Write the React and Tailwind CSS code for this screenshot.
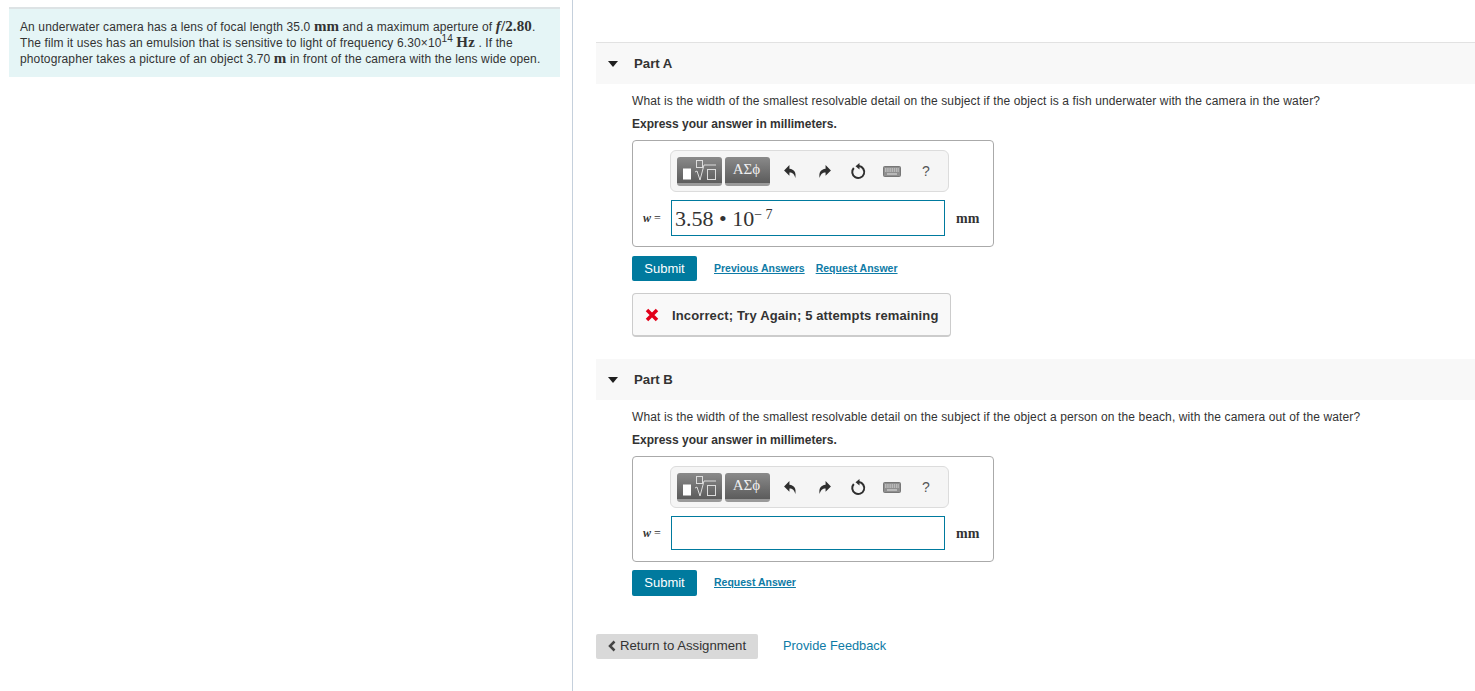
import React from "react";

const sans = "font-['Liberation_Sans',Arial,sans-serif]";
const serif = "font-['Liberation_Serif','Times_New_Roman',serif]";
const link = "text-[10.5px] font-bold text-[#0e7ba6] underline";
const math = `${serif} text-[15px] leading-[0] font-bold`;

function Toolbar() {
  return (
    <div className="ml-[37px] flex h-[42px] w-[279px] items-center rounded-[6px] border border-[#dcdcdc] bg-[#f5f5f5] pl-[6px]">
      <div className="h-[29px] w-[45px] rounded-[3px] border-b-[3px] border-[#9a9a9a] bg-gradient-to-b from-[#8a8a8a] to-[#5c5c5c]">
        <svg width="45" height="26" viewBox="0 0 45 26">
          <rect x="6" y="11.500" width="8" height="11" fill="#fff" />
          <rect x="19.500" y="3.500" width="6" height="7" fill="none" stroke="#dcdcdc" />
          <path d="M18 15l2-1 3 9 4-15h12" fill="none" stroke="#dcdcdc" />
          <rect x="30.500" y="12.500" width="8" height="10" fill="none" stroke="#dcdcdc" />
        </svg>
      </div>
      <div className={`ml-[3px] flex h-[29px] w-[45px] items-center justify-center rounded-[3px] border-b-[3px] border-[#9a9a9a] bg-gradient-to-b from-[#8a8a8a] to-[#5c5c5c] pr-[2px] text-[15px] text-[#f0f0f0] ${serif}`}>
        ΑΣϕ
      </div>
      <svg className="ml-[13px]" width="15" height="15" viewBox="0 0 14 14">
        <path d="M6 1L1 6l5 5V8c3 0 4.500 1.500 5.500 5 1-5-1-8-5.500-8.500z" fill="#2f2f2f" />
      </svg>
      <svg className="ml-[19px]" width="15" height="15" viewBox="0 0 14 14">
        <path d="M8 1l5 5-5 5V8c-3 0-4.500 1.500-5.500 5-1-5 1-8 5.500-8.500z" fill="#2f2f2f" />
      </svg>
      <svg className="ml-[18px]" width="16" height="17" viewBox="0 0 16 17">
        <path d="M3.800 5A6 6 0 1 0 9 3.100" fill="none" stroke="#2f2f2f" strokeWidth="2" />
        <path d="M5.500 3.200L9.500 0v6.500z" fill="#2f2f2f" />
      </svg>
      <svg className="ml-[17px]" width="18" height="11" viewBox="0 0 18 11">
        <rect x="0.500" y="0.500" width="17" height="10" rx="1" fill="#8f8f8f" stroke="#777" />
        <path d="M2 3h14M2 5h14" stroke="#e4e4e4" strokeDasharray="1.500 .7" />
        <path d="M4 8h10" stroke="#e4e4e4" />
      </svg>
      <span className={`ml-[21px] text-[14px] text-[#555] ${sans}`}>?</span>
    </div>
  );
}

function AnswerBox({ value, inputHeight, height }) {
  return (
    <div className={`flex w-[362px] flex-col rounded-[4px] border border-[#aaa] pt-[9px] ${height}`}>
      <Toolbar />
      <div className="mt-[8px] flex items-center">
        <span className={`ml-[10px] w-[28px] text-[12px] text-[#333] ${serif}`}>
          <i className="font-bold">w</i> =
        </span>
        <div className={`flex w-[274px] items-center border border-[#007a9e] pl-[3px] ${inputHeight} ${serif}`}>
          {value}
        </div>
        <span className={`ml-[11px] text-[14px] font-bold text-[#333] ${serif}`}>mm</span>
      </div>
    </div>
  );
}

function PartHeader({ label }) {
  return (
    <div className="flex h-[41px] items-center bg-[#f8f8f8] pl-[12px]">
      <div className="h-0 w-0 border-x-[5px] border-t-[6px] border-x-transparent border-t-[#1f1f1f]" />
      <span className="ml-[16px] text-[13.200px] font-bold text-[#333]">{label}</span>
    </div>
  );
}

function SubmitBtn({ h }) {
  return (
    <div className={`flex w-[65px] items-center justify-center rounded-[2px] bg-[#007a9e] text-[13px] text-white ${h}`}>
      Submit
    </div>
  );
}

export default function App() {
  return (
    <div className={`flex h-[691px] w-[1475px] overflow-hidden bg-white text-[#333] ${sans}`}>
      <div className="h-full w-[573px] shrink-0 border-r border-[#c5d0dc] pl-[9px] pr-[12px] pt-[7px]">
        <div className="h-[70px] border-t-2 border-[#dde3e5] bg-[#e5f5f6] pl-[11px] pt-[10px] text-[12px] leading-[16px] tracking-[0.12px] text-[#333]">
          <p className="whitespace-nowrap">
            An underwater camera has a lens of focal length 35.0 <span className={math}>mm</span> and a maximum aperture of{" "}
            <span className={math}><i>f</i>/2.80</span>.
          </p>
          <p className="whitespace-nowrap">
            The film it uses has an emulsion that is sensitive to light of frequency 6.30×10
            <sup className="text-[10px]">14</sup> <span className={math}>Hz</span> . If the
          </p>
          <p className="whitespace-nowrap">
            photographer takes a picture of an object 3.70 <span className={math}>m</span> in front of the camera with the lens wide open.
          </p>
        </div>
      </div>

      <div className="min-w-0 flex-1 pl-[23px] pt-[42px]">
        <div className="border-t border-[#e2e2e2]">
          <PartHeader label="Part A" />
        </div>
        <div className="pl-[36px]">
          <p className="mt-[9px] text-[12px] leading-[16px] tracking-[0.12px]">
            What is the width of the smallest resolvable detail on the subject if the object is a fish underwater with the camera in the water?
          </p>
          <p className="mt-[7px] text-[12px] font-bold leading-[16px]">Express your answer in millimeters.</p>
          <div className="mt-[8px]">
            <AnswerBox
              height="h-[107px]"
              inputHeight="h-[36px]"
              value={
                <span className="pt-[1px] text-[22px] leading-none text-[#333]">
                  3.58 • 10<sup className="text-[14px]">− 7</sup>
                </span>
              }
            />
          </div>
          <div className="mt-[9px] flex items-center">
            <SubmitBtn h="h-[25px]" />
            <span className={`ml-[17px] ${link}`}>Previous Answers</span>
            <span className={`ml-[11px] ${link}`}>Request Answer</span>
          </div>
          <div className="mt-[12px] flex h-[44px] w-[319px] items-center rounded-[4px] border border-b-2 border-[#ccc] bg-[#f9f9f9] pl-[12px]">
            <svg width="14" height="14" viewBox="0 0 14 14">
              <path d="M2 2l10 10M12 2L2 12" stroke="#e2001a" strokeWidth="3.500" />
            </svg>
            <span className="ml-[13px] pt-[2px] text-[13px] font-bold tracking-[0.13px] text-[#333]">Incorrect; Try Again; 5 attempts remaining</span>
          </div>
        </div>

        <div className="mt-[22px]">
          <PartHeader label="Part B" />
        </div>
        <div className="pl-[36px]">
          <p className="mt-[9px] text-[12px] leading-[16px] tracking-[0.12px]">
            What is the width of the smallest resolvable detail on the subject if the object a person on the beach, with the camera out of the water?
          </p>
          <p className="mt-[7px] text-[12px] font-bold leading-[16px]">Express your answer in millimeters.</p>
          <div className="mt-[8px]">
            <AnswerBox height="h-[106px]" inputHeight="h-[34px]" value={null} />
          </div>
          <div className="mt-[8px] flex items-center">
            <SubmitBtn h="h-[26px]" />
            <span className={`ml-[17px] ${link}`}>Request Answer</span>
          </div>
        </div>

        <div className="mt-[38px] flex items-center">
          <div className="flex h-[25px] w-[162px] items-center rounded-[2px] bg-[#d9d9d9] pb-[1px] pl-[11px] text-[13.200px] text-[#333]">
            <svg width="10" height="12" viewBox="0 0 10 12">
              <path d="M7.500 1.500L3 6l4.500 4.500" fill="none" stroke="#444" strokeWidth="2.500" />
            </svg>
            <span className="ml-[3px]">Return to Assignment</span>
          </div>
          <span className="ml-[25px] pb-[1px] text-[12.800px] text-[#0e7ba6]">Provide Feedback</span>
        </div>
      </div>
    </div>
  );
}
